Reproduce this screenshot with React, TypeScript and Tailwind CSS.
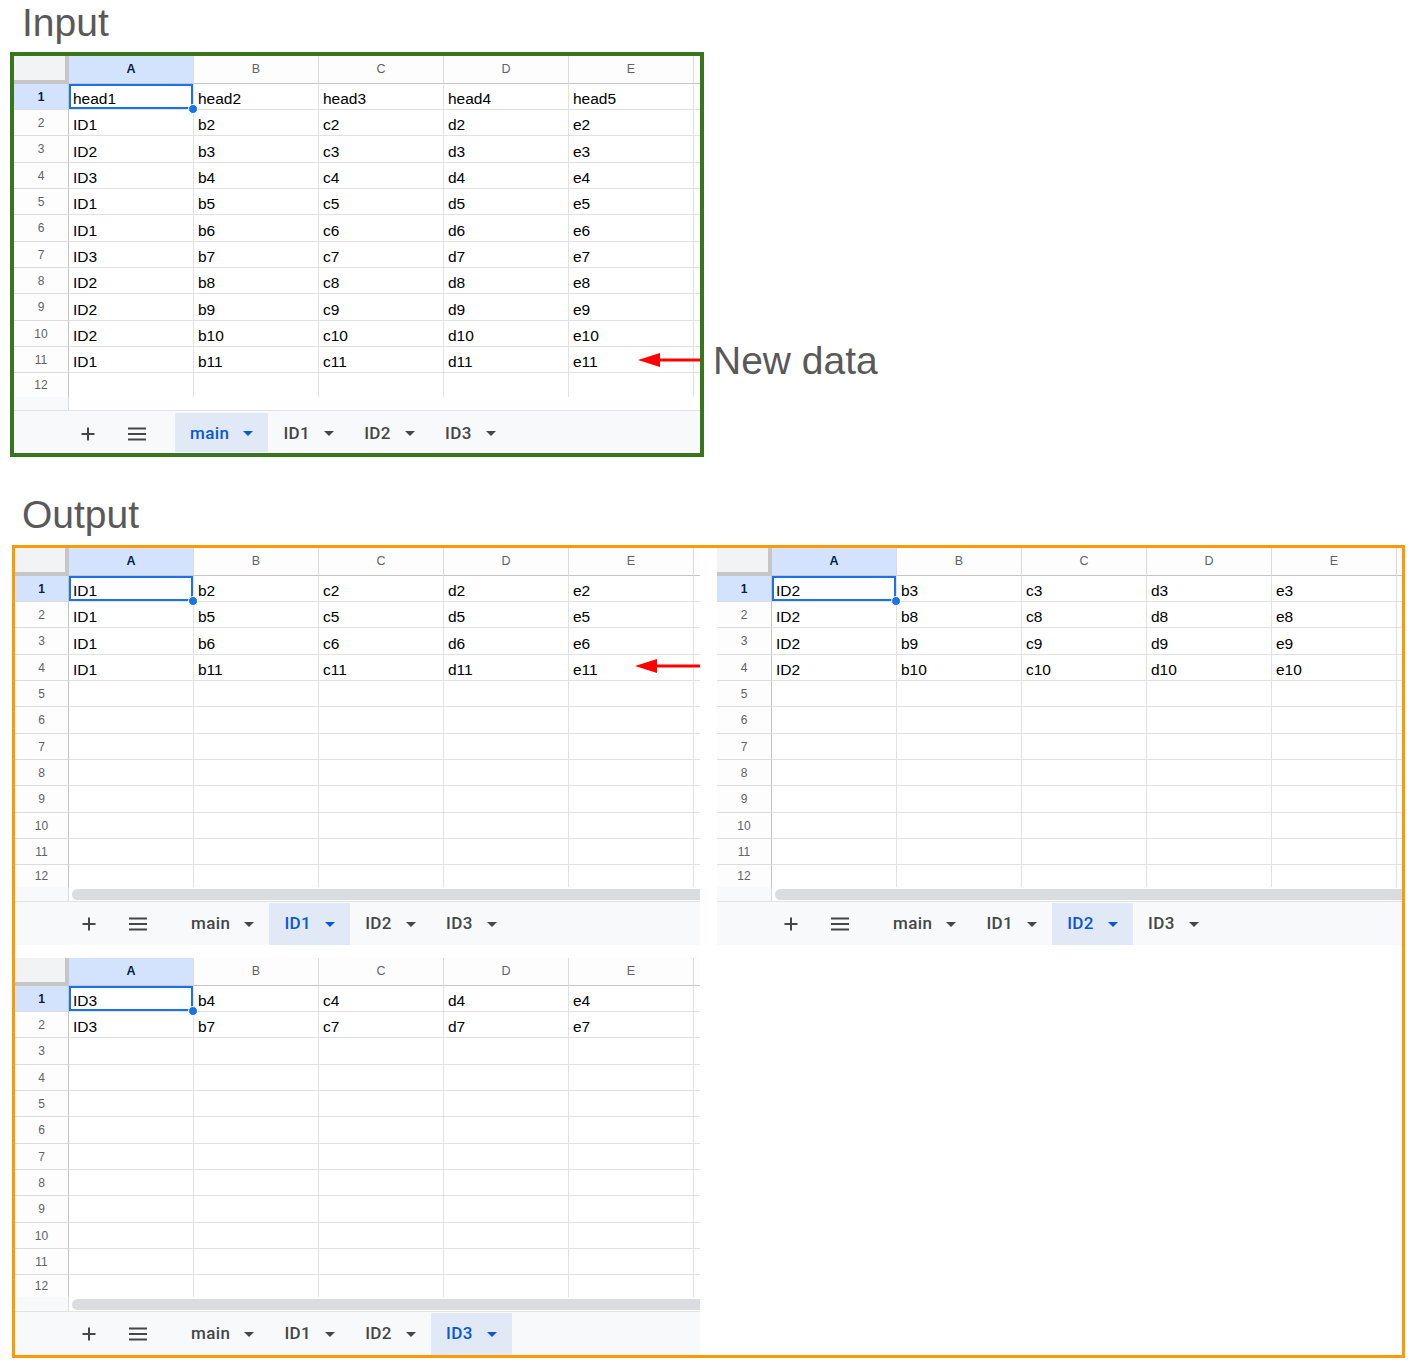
import React from 'react';

type Row = string[];

const COLS = ['A', 'B', 'C', 'D', 'E'];
const TABS = ['main', 'ID1', 'ID2', 'ID3'];
// 11 full rows, 289px total
const ROW_H = ['h-[26px]', 'h-[26px]', 'h-[27px]', 'h-[26px]', 'h-[26px]', 'h-[27px]', 'h-[26px]', 'h-[26px]', 'h-[27px]', 'h-[26px]', 'h-[26px]'];

const make = (id: string, n: number): Row => [id, `b${n}`, `c${n}`, `d${n}`, `e${n}`];

const inputRows: Row[] = [
  ['head1', 'head2', 'head3', 'head4', 'head5'],
  make('ID1', 2),
  make('ID2', 3),
  make('ID3', 4),
  make('ID1', 5),
  make('ID1', 6),
  make('ID3', 7),
  make('ID2', 8),
  make('ID2', 9),
  make('ID2', 10),
  make('ID1', 11),
];

const id1Rows: Row[] = [make('ID1', 2), make('ID1', 5), make('ID1', 6), make('ID1', 11)];
const id2Rows: Row[] = [make('ID2', 3), make('ID2', 8), make('ID2', 9), make('ID2', 10)];
const id3Rows: Row[] = [make('ID3', 4), make('ID3', 7)];

const PlusIcon = () => (
  <svg width="24" height="24" viewBox="0 0 24 24" className="shrink-0">
    <path d="M5.5 12h13M12 5.5v13" stroke="#444746" strokeWidth="2" />
  </svg>
);

const MenuIcon = () => (
  <svg width="24" height="24" viewBox="0 0 24 24" className="shrink-0">
    <path d="M3 6.5h18M3 12h18M3 17.5h18" stroke="#444746" strokeWidth="1.8" />
  </svg>
);

const Caret = () => (
  <svg width="10" height="5" viewBox="0 0 10 5" className="shrink-0">
    <polygon points="0,0 10,0 5,5" fill="currentColor" />
  </svg>
);

const RedArrow: React.FC<{ className: string; width: number }> = ({ className, width }) => (
  <svg width={width} height="16" viewBox={`0 0 ${width} 16`} className={className}>
    <line x1="18" y1="8" x2={width} y2="8" stroke="#ff0000" strokeWidth="3" />
    <polygon points="0,8 22,1 22,15" fill="#ff0000" />
  </svg>
);

interface SheetProps {
  rows: Row[];
  active: string;
  input?: boolean;
  wideHeader?: boolean;
}

const Sheet: React.FC<SheetProps> = ({ rows, active, input = false, wideHeader = false }) => {
  const hdrW = input || wideHeader ? 'w-[55px]' : 'w-[54px]';

  return (
    <div className={`flex flex-col h-[397px] bg-white ${input ? 'w-[686px]' : 'w-[685px]'}`}>
      {/* column headers */}
      <div className="flex h-[28px] shrink-0">
        <div className={`${hdrW} shrink-0 bg-[#f1f3f4] border-r-4 border-b-4 border-[#c4c7c5]`} />
        {COLS.map((c) => (
          <div
            key={c}
            className={`w-[125px] shrink-0 flex items-center justify-center border-r border-r-[#dadce0] border-b border-b-[#c4c7c5] text-[12.5px] ${
              c === 'A' ? 'bg-[#d3e3fd] font-bold text-[#041e49]' : 'bg-[#fdfdfd] text-[#5f6368]'
            }`}
          >
            {c}
          </div>
        ))}
        <div className="flex-1 bg-[#fdfdfd] border-b border-[#c4c7c5]" />
      </div>

      {/* rows 1-11 */}
      {ROW_H.map((h, i) => (
        <div key={i} className={`flex ${h} shrink-0`}>
          <div
            className={`${hdrW} shrink-0 flex items-center justify-center border-r border-r-[#c4c7c5] border-b border-b-[#dadce0] text-[12px] ${
              i === 0 ? 'bg-[#d3e3fd] font-bold text-[#041e49]' : 'bg-[#fdfdfd] text-[#5f6368]'
            }`}
          >
            {i + 1}
          </div>
          {COLS.map((c, j) => (
            <div
              key={c}
              className="relative w-[125px] shrink-0 flex items-end pl-[4px] pb-[1px] border-r border-b border-[#e2e2e2] text-[15.5px] leading-[18px] text-black whitespace-nowrap"
            >
              {rows[i] ? rows[i][j] : ''}
              {i === 0 && j === 0 && (
                <>
                  <div className="absolute inset-0 border-2 border-[#1a73e8] z-10" />
                  <div className="absolute right-[-5px] bottom-[-5px] w-[10px] h-[10px] rounded-full bg-[#1a73e8] border border-white z-20" />
                </>
              )}
            </div>
          ))}
          <div className="flex-1 border-b border-[#e2e2e2]" />
        </div>
      ))}

      {/* row 12, cut off */}
      <div className={`flex shrink-0 ${input ? 'h-[24px]' : 'h-[22px]'}`}>
        <div className={`${hdrW} shrink-0 flex items-center justify-center border-r border-[#c4c7c5] bg-[#fdfdfd] text-[12px] text-[#5f6368]`}>
          12
        </div>
        {COLS.map((c) => (
          <div key={c} className="w-[125px] shrink-0 border-r border-[#e2e2e2]" />
        ))}
        <div className="flex-1" />
      </div>

      {/* scrollbar strip */}
      <div className={`flex shrink-0 ${input ? 'h-[13px]' : 'h-[14px]'}`}>
        <div className={`${hdrW} shrink-0 bg-[#f8f9fa] border-r border-[#dadce0]`} />
        <div className="flex-1 flex items-center pl-[3px] bg-white">
          {!input && <div className="h-[11px] w-full rounded-l-full bg-[#dadce0]" />}
        </div>
      </div>

      {/* tab bar */}
      <div
        className={`flex items-center shrink-0 bg-[#f8f9fa] border-t border-[#e1e3e1] pl-[62px] text-[#444746] font-['Roboto',sans-serif] ${
          input ? 'h-[43px] pt-[3px]' : 'h-[44px] pt-[1px]'
        }`}
      >
        <PlusIcon />
        <div className="ml-[25px]">
          <MenuIcon />
        </div>
        <div className={`flex h-full ml-[26px] ${input ? '-mt-[3px]' : '-mt-[1px]'}`}>
          {TABS.map((t) => (
            <div
              key={t}
              className={`flex items-center gap-[14px] px-[15px] h-full text-[17px] font-medium tracking-[0.4px] ${
                input ? 'pt-[3px]' : 'pt-[1px]'
              } ${t === active ? 'bg-[#e1e9f7] text-[#0b57d0]' : 'text-[#444746]'}`}
            >
              <span>{t}</span>
              <Caret />
            </div>
          ))}
        </div>
      </div>
    </div>
  );
};

const App: React.FC = () => {
  return (
    <div className="relative w-[1412px] h-[1362px] bg-white overflow-hidden font-['Liberation_Sans',Arial,sans-serif]">
      <div className="h-[52px] pl-[22px] text-[39px] leading-[45px] text-[#595959]">Input</div>

      <div className="flex items-start">
        <div className="relative ml-[10px] border-4 border-[#38761d]">
          <Sheet rows={inputRows} active="main" input />
          <RedArrow className="absolute left-[624px] top-[296px] z-30" width={62} />
        </div>
        <div className="ml-[9px] mt-[286px] text-[39px] leading-[45px] text-[#595959] whitespace-nowrap">New data</div>
      </div>

      <div className="mt-[35px] h-[53px] pl-[22px] text-[39px] leading-[45px] text-[#595959]">Output</div>

      <div className="relative ml-[12px] w-fit border-[3px] border-[#ff9900]">
        <div className="flex gap-[17px]">
          <Sheet rows={id1Rows} active="ID1" />
          <Sheet rows={id2Rows} active="ID2" wideHeader />
        </div>
        <div className="mt-[13px]">
          <Sheet rows={id3Rows} active="ID3" />
        </div>
        <RedArrow className="absolute left-[620px] top-[110px] z-30" width={65} />
      </div>
    </div>
  );
};

export default App;
